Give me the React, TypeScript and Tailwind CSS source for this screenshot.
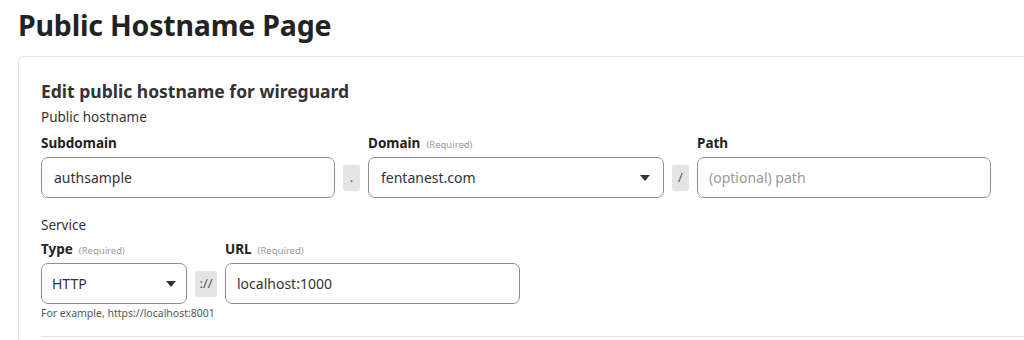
import React from "react";

const font = { fontFamily: '"Noto Sans", "Noto Sans CJK KR", sans-serif' };

function Label({ text, required }: { text: string; required?: boolean }) {
  return (
    <div className="flex items-baseline h-[20px] mb-[4px]">
      <span className="text-[13.5px] font-bold text-[#222] leading-[20px]">{text}</span>
      {required && (
        <span className="ml-[6px] text-[9.5px] text-[#999] leading-[20px]">(Required)</span>
      )}
    </div>
  );
}

function Caret() {
  return (
    <svg width="10" height="6" viewBox="0 0 10 6" className="shrink-0">
      <path d="M0 0 L10 0 L5 6 Z" fill="#333" />
    </svg>
  );
}

function Sep({ text, w }: { text: string; w: string }) {
  return (
    <div
      className={`${w} h-[26px] rounded-[3px] bg-[#e4e4e4] flex items-center justify-center text-[13px] text-[#555] shrink-0`}
    >
      {text}
    </div>
  );
}

export default function App() {
  return (
    <div className="w-[1024px] h-[340px] overflow-hidden bg-white text-[#333]" style={font}>
      <h1 className="pl-[18px] pt-[3px] text-[28.5px] font-bold text-[#222] leading-[44px] tracking-[-0.2px]">
        Public Hostname Page
      </h1>
      <div className="ml-[18px] mt-[9px] w-[1040px] rounded-[5px] border border-[#e3e3e3] shadow-[0_1px_3px_rgba(0,0,0,0.06)] pl-[22px] pt-[22px] pb-[20px]">
        <h2 className="text-[17.5px] font-bold text-[#333] leading-[24px] mb-[4px]">
          Edit public hostname for wireguard
        </h2>
        <div className="text-[13.5px] leading-[20px] mb-[6px]">Public hostname</div>

        <div className="flex items-end">
          <div className="w-[294px]">
            <Label text="Subdomain" />
            <div className="h-[41px] rounded-[7px] border border-[#8e8e8e] flex items-center px-[12px] text-[14px] text-[#333]">
              authsample
            </div>
          </div>
          <div className="h-[41px] flex items-center mx-[8px]">
            <Sep text="." w="w-[17px]" />
          </div>
          <div className="w-[296px]">
            <Label text="Domain" required />
            <div className="h-[41px] rounded-[7px] border border-[#8e8e8e] flex items-center justify-between pl-[12px] pr-[13px] text-[14px] text-[#333]">
              <span>fentanest.com</span>
              <Caret />
            </div>
          </div>
          <div className="h-[41px] flex items-center mx-[8px]">
            <Sep text="/" w="w-[17px]" />
          </div>
          <div className="w-[294px]">
            <Label text="Path" />
            <div className="h-[41px] rounded-[7px] border border-[#8e8e8e] flex items-center px-[11px] text-[14px] text-[#999]">
              (optional) path
            </div>
          </div>
        </div>

        <div className="text-[13.5px] leading-[20px] mt-[17px] mb-[4px]">Service</div>
        <div className="flex items-end">
          <div className="w-[146px]">
            <Label text="Type" required />
            <div className="h-[41px] rounded-[7px] border border-[#8e8e8e] flex items-center justify-between pl-[10px] pr-[10px] text-[14px] text-[#333]">
              <span>HTTP</span>
              <Caret />
            </div>
          </div>
          <div className="h-[41px] flex items-center mx-[8px]">
            <Sep text="://" w="w-[22px]" />
          </div>
          <div className="w-[295px]">
            <Label text="URL" required />
            <div className="h-[41px] rounded-[7px] border border-[#8e8e8e] flex items-center px-[11px] text-[14px] text-[#333]">
              localhost:1000
            </div>
          </div>
        </div>
        <div className="text-[10.5px] text-[#555] leading-[14px] mt-[2px]">
          For example, https://localhost:8001
        </div>
        <div className="mt-[16px] border-t border-[#e3e3e3]" />
      </div>
    </div>
  );
}
